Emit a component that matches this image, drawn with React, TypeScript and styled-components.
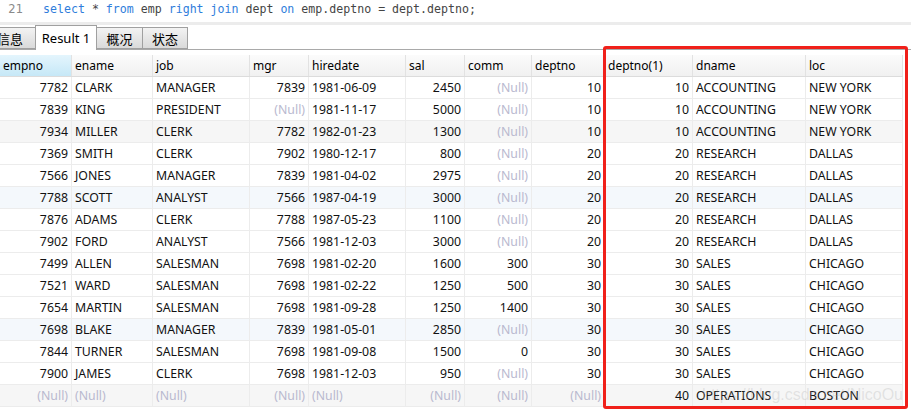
import styled, { createGlobalStyle } from 'styled-components';

const GlobalStyle = createGlobalStyle`
    html, body {
        margin: 0;
        padding: 0;
        background: #ffffff;
        font-family: 'Noto Sans', 'Noto Sans CJK SC', sans-serif;
    }
`;

const COLS = '72px 81px 97px 59px 97px 59px 67px 73px 88px 113px 97px';

type Cell = string | number | null;

interface Column {
    name: string;
    right?: boolean;
}

const columns: Column[] = [
    { name: 'empno', right: true },
    { name: 'ename' },
    { name: 'job' },
    { name: 'mgr', right: true },
    { name: 'hiredate' },
    { name: 'sal', right: true },
    { name: 'comm', right: true },
    { name: 'deptno', right: true },
    { name: 'deptno(1)', right: true },
    { name: 'dname' },
    { name: 'loc' },
];

const rows: Cell[][] = [
    [7782, 'CLARK', 'MANAGER', 7839, '1981-06-09', 2450, null, 10, 10, 'ACCOUNTING', 'NEW YORK'],
    [7839, 'KING', 'PRESIDENT', null, '1981-11-17', 5000, null, 10, 10, 'ACCOUNTING', 'NEW YORK'],
    [7934, 'MILLER', 'CLERK', 7782, '1982-01-23', 1300, null, 10, 10, 'ACCOUNTING', 'NEW YORK'],
    [7369, 'SMITH', 'CLERK', 7902, '1980-12-17', 800, null, 20, 20, 'RESEARCH', 'DALLAS'],
    [7566, 'JONES', 'MANAGER', 7839, '1981-04-02', 2975, null, 20, 20, 'RESEARCH', 'DALLAS'],
    [7788, 'SCOTT', 'ANALYST', 7566, '1987-04-19', 3000, null, 20, 20, 'RESEARCH', 'DALLAS'],
    [7876, 'ADAMS', 'CLERK', 7788, '1987-05-23', 1100, null, 20, 20, 'RESEARCH', 'DALLAS'],
    [7902, 'FORD', 'ANALYST', 7566, '1981-12-03', 3000, null, 20, 20, 'RESEARCH', 'DALLAS'],
    [7499, 'ALLEN', 'SALESMAN', 7698, '1981-02-20', 1600, 300, 30, 30, 'SALES', 'CHICAGO'],
    [7521, 'WARD', 'SALESMAN', 7698, '1981-02-22', 1250, 500, 30, 30, 'SALES', 'CHICAGO'],
    [7654, 'MARTIN', 'SALESMAN', 7698, '1981-09-28', 1250, 1400, 30, 30, 'SALES', 'CHICAGO'],
    [7698, 'BLAKE', 'MANAGER', 7839, '1981-05-01', 2850, null, 30, 30, 'SALES', 'CHICAGO'],
    [7844, 'TURNER', 'SALESMAN', 7698, '1981-09-08', 1500, 0, 30, 30, 'SALES', 'CHICAGO'],
    [7900, 'JAMES', 'CLERK', 7698, '1981-12-03', 950, null, 30, 30, 'SALES', 'CHICAGO'],
    [null, null, null, null, null, null, null, null, 40, 'OPERATIONS', 'BOSTON'],
];

// tint of each row as seen in the grid
const rowTint = (i: number) => {
    if (i === 5 || i === 11) return '#f4f8fc';
    if (i === 2 || i === 14) return '#f6f6f6';
    return '#ffffff';
};

const keywords = ['select', 'from', 'right', 'join', 'on'];

const tabs = [
    { label: '信息', width: 52 },
    { label: 'Result 1', width: 62, active: true },
    { label: '概况', width: 47 },
    { label: '状态', width: 46 },
];

const App = () => {
    const code = 'select * from emp right join dept on emp.deptno = dept.deptno;';

    return (
        <Page>
            <GlobalStyle />
            <Editor>
                <CodeLine>
                    <LineNo>21</LineNo>
                    <Code>
                        {code.split(/(\s+)/).map((tok, i) =>
                            keywords.includes(tok) ? (
                                <Kw key={i}>{tok}</Kw>
                            ) : (
                                <span key={i}>{tok}</span>
                            )
                        )}
                    </Code>
                </CodeLine>
                <CodeLine>
                    <LineNo>22</LineNo>
                    <Code />
                </CodeLine>
            </Editor>
            <Splitter />
            <TabBar>
                {tabs.map((t) => (
                    <Tab key={t.label} $active={t.active} $width={t.width}>
                        {t.label}
                    </Tab>
                ))}
            </TabBar>
            <Grid>
                <HeaderRow>
                    {columns.map((col, i) => (
                        <HeadCell key={col.name} $selected={i === 0}>
                            {col.name}
                        </HeadCell>
                    ))}
                </HeaderRow>
                {rows.map((row, r) => (
                    <Row key={r} $bg={rowTint(r)}>
                        {row.map((v, c) => (
                            <DataCell
                                key={c}
                                $right={columns[c].right}
                                $null={v === null}
                            >
                                {v === null ? '(Null)' : v}
                            </DataCell>
                        ))}
                    </Row>
                ))}
            </Grid>
            <Highlight />
            <Watermark>https://blog.csdn.net/NicoOu</Watermark>
        </Page>
    );
};

const Page = styled.div`
    position: relative;
    width: 911px;
    height: 411px;
    overflow: hidden;
    background: #ffffff;
`;

const Editor = styled.div`
    height: 22px;
    overflow: hidden;
    background: #ffffff;
`;

const CodeLine = styled.div`
    display: flex;
    height: 18px;
    align-items: center;
    font-family: 'DejaVu Sans Mono', monospace;
    font-size: 11.6px;
    white-space: pre;
`;

const LineNo = styled.span`
    width: 23px;
    text-align: right;
    color: #8a8a8a;
    font-family: 'DejaVu Sans', sans-serif;
    font-size: 11.5px;
`;

const Code = styled.span`
    margin-left: 20px;
    color: #444444;
`;

const Kw = styled.span`
    color: #2f7ddb;
`;

const Splitter = styled.div`
    height: 3px;
    background: #ececec;
`;

const TabBar = styled.div`
    display: flex;
    align-items: flex-end;
    height: 24px;
    border-bottom: 1px solid #a9a9a9;
    margin-left: -16px;
`;

const Tab = styled.div<{ $active?: boolean; $width: number }>`
    display: flex;
    align-items: center;
    justify-content: center;
    box-sizing: border-box;
    flex: 0 0 ${(p) => p.$width}px;
    height: ${(p) => (p.$active ? '25px' : '22px')};
    margin-bottom: ${(p) => (p.$active ? '-1px' : '0')};
    margin-right: -1px;
    border: 1px solid #a0a0a0;
    border-bottom: ${(p) => (p.$active ? 'none' : '1px solid #a0a0a0')};
    background: ${(p) =>
        p.$active
            ? '#ffffff'
            : 'linear-gradient(#f3f3f3, #e6e6e6 50%, #dadada)'};
    color: #000000;
    font-size: 13px;
    position: relative;
    z-index: ${(p) => (p.$active ? 1 : 0)};
`;

const Grid = styled.div`
    margin-top: 5px;
    width: 903px;
`;

const HeaderRow = styled.div`
    display: grid;
    grid-template-columns: ${COLS};
    height: 22px;
    background: linear-gradient(#fbfbfb, #f1f1f1);
    border-bottom: 1px solid #dcdcdc;
    box-sizing: border-box;
`;

const HeadCell = styled.div<{ $selected?: boolean }>`
    display: flex;
    align-items: center;
    padding-left: 3px;
    border-right: 1px solid #e2e2e2;
    font-size: 12px;
    color: #000000;
    background: ${(p) =>
        p.$selected ? 'linear-gradient(#e4f5fd, #c6e8f7)' : 'transparent'};
    white-space: nowrap;
    overflow: hidden;
`;

const Row = styled.div<{ $bg: string }>`
    display: grid;
    grid-template-columns: ${COLS};
    height: 22px;
    box-sizing: border-box;
    border-bottom: 1px solid #ececec;
    background: ${(p) => p.$bg};
`;

const DataCell = styled.div<{ $right?: boolean; $null?: boolean }>`
    display: flex;
    align-items: center;
    justify-content: ${(p) => (p.$right ? 'flex-end' : 'flex-start')};
    padding: 0 3px;
    border-right: 1px solid #ececec;
    font-size: 12.3px;
    color: ${(p) => (p.$null ? '#b9b9cf' : '#111111')};
    white-space: nowrap;
    overflow: hidden;
`;

const Highlight = styled.div`
    position: absolute;
    left: 603px;
    top: 46px;
    width: 305px;
    height: 363px;
    box-sizing: border-box;
    border: 3px solid #f0201a;
    border-radius: 3px;
    pointer-events: none;
`;

const Watermark = styled.div`
    position: absolute;
    right: 8px;
    top: 386px;
    font-family: 'Liberation Sans', sans-serif;
    font-size: 16px;
    color: rgba(170, 170, 170, 0.28);
    white-space: nowrap;
    pointer-events: none;
`;

export default App;
